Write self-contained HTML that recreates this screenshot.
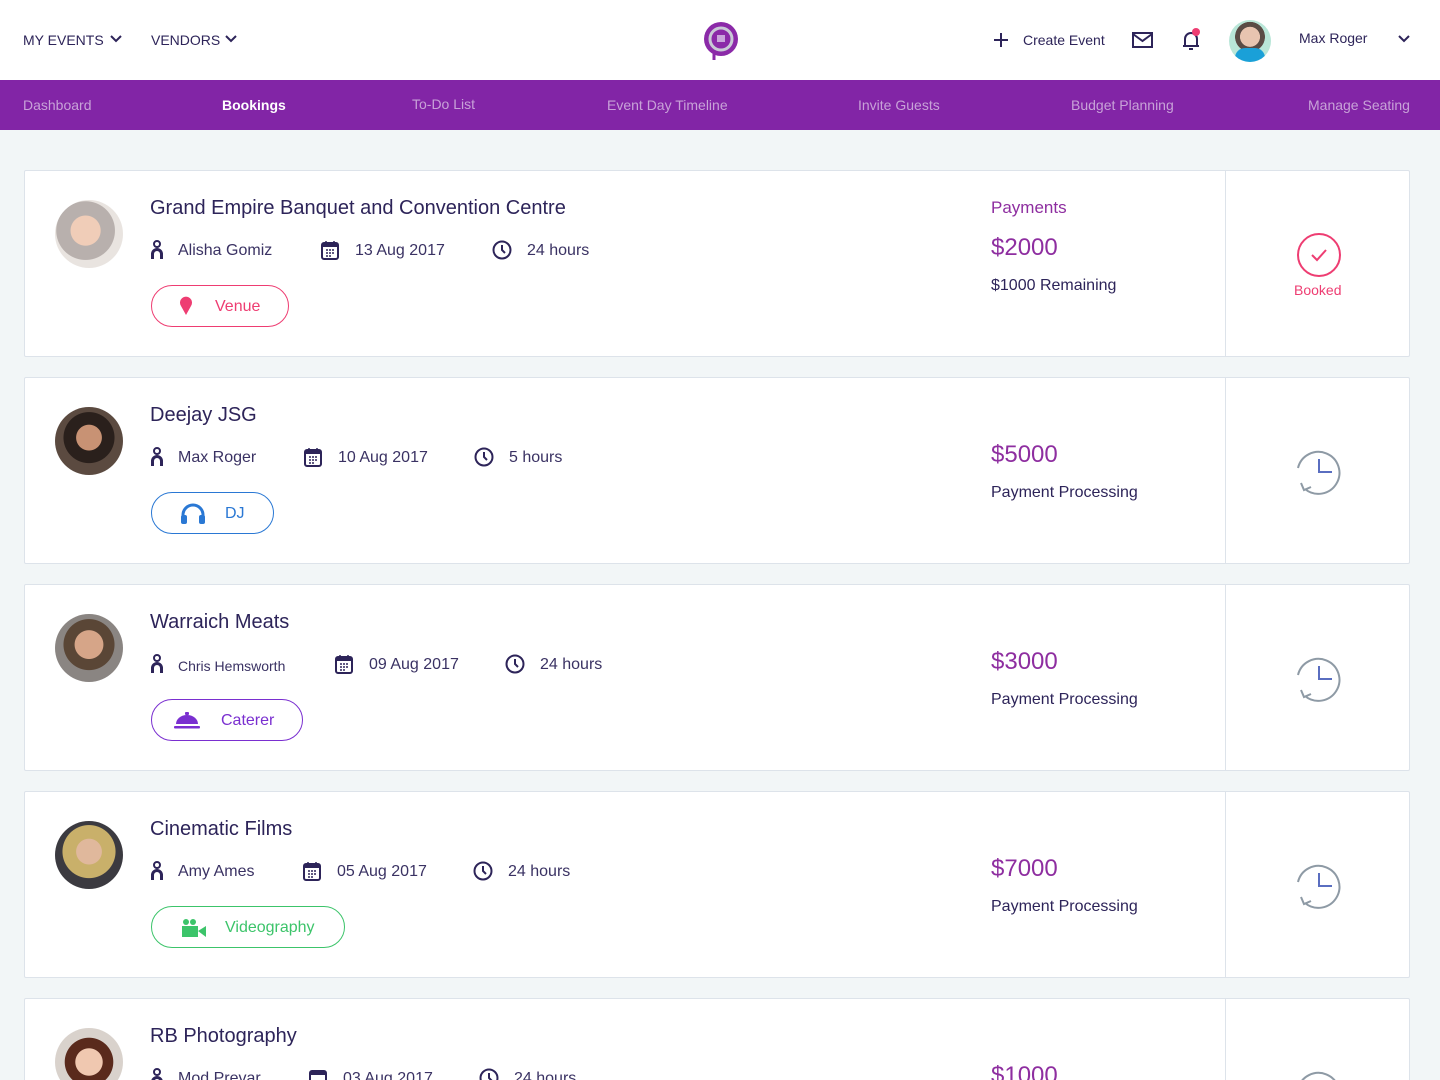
<!DOCTYPE html>
<html><head><meta charset="utf-8">
<style>
*{margin:0;padding:0;box-sizing:border-box}
html,body{width:1440px;height:1080px;overflow:hidden}
body{background:#f2f6f7;font-family:"Liberation Sans",sans-serif;color:#2d2459;position:relative}
.abs{position:absolute}
.top{position:absolute;left:0;top:0;width:1440px;height:80px;background:#fff}
.nav{position:absolute;left:0;top:80px;width:1440px;height:50px;background:#8225a6}
.nav span{position:absolute;top:17px;font-size:14px;color:#c8a2d8;white-space:nowrap}
.card{position:absolute;left:24px;width:1386px;height:187px;background:#fff;border:1px solid #dde3ea;border-radius:2px;overflow:hidden}
.div{position:absolute;left:1200px;top:0;width:1px;height:100%;background:#dde3ea}
.av{position:absolute;left:30px;top:29px;width:68px;height:68px;border-radius:50%}
.title{position:absolute;left:125px;top:26px;font-size:20px;color:#2d2459;white-space:nowrap}
.m{position:absolute;top:71px;font-size:16px;color:#3a3263;white-space:nowrap}
.ic{position:absolute;top:69px}
.pill{position:absolute;left:126px;top:114px;height:42px;border:1px solid;border-radius:21px}
.pill span{position:absolute;top:12px;font-size:16px}
.pill svg{position:absolute}
.amt{position:absolute;left:966px;font-size:24px;color:#8e2ea0}
.sub{position:absolute;left:966px;font-size:16px;color:#2d2459;white-space:nowrap}
.clk{position:absolute;left:1268px;top:68px}
</style></head><body>
<div class="top">
  <div class="abs" style="left:23px;top:32px;font-size:14px;color:#2d2459">MY EVENTS</div>
  <svg class="abs" style="left:110px;top:34px" width="12" height="10"><path d="M1 2l5 5 5-5" fill="none" stroke="#2d2459" stroke-width="2"/></svg>
  <div class="abs" style="left:151px;top:32px;font-size:14px;color:#2d2459">VENDORS</div>
  <svg class="abs" style="left:225px;top:34px" width="12" height="10"><path d="M1 2l5 5 5-5" fill="none" stroke="#2d2459" stroke-width="2"/></svg>
  <svg class="abs" style="left:702px;top:20px" width="38" height="42"><circle cx="19" cy="19" r="17" fill="#8b2aa8"/><circle cx="19" cy="19" r="11" fill="none" stroke="#c9c9d6" stroke-width="3"/><circle cx="19" cy="19" r="8" fill="#8b2aa8"/><rect x="15" y="15" width="8" height="7" fill="#c9a6db"/><path d="M12 30v10" stroke="#8b2aa8" stroke-width="3"/></svg>
  <svg class="abs" style="left:993px;top:32px" width="16" height="16"><path d="M8 1v14M1 8h14" stroke="#2d2459" stroke-width="2"/></svg>
  <div class="abs" style="left:1023px;top:32px;font-size:14px;color:#2d2459">Create Event</div>
  <svg class="abs" style="left:1132px;top:31px" width="22" height="18"><rect x="1" y="2" width="19" height="14" fill="none" stroke="#2d2459" stroke-width="2"/><path d="M1 3l9.5 7 9.5-7" fill="none" stroke="#2d2459" stroke-width="2"/></svg>
  <svg class="abs" style="left:1181px;top:28px" width="22" height="24"><path d="M4 18V11a6 6 0 0112 0v7M2 18h16M8 21h4" fill="none" stroke="#2d2459" stroke-width="2"/><circle cx="15" cy="4" r="4" fill="#ee3d72"/></svg>
  <div class="abs" style="left:1229px;top:20px;width:42px;height:42px;border-radius:50%;background:radial-gradient(circle at 50% 40%,#e8c4b0 0 30%,#5a4b45 31% 45%,#b9e6d8 46%),#9bd;overflow:hidden"><div style="position:absolute;left:6px;top:28px;width:30px;height:14px;background:#1aa0d8;border-radius:10px 10px 0 0"></div></div>
  <div class="abs" style="left:1299px;top:30px;font-size:14px;color:#2d2459">Max Roger</div>
  <svg class="abs" style="left:1398px;top:34px" width="12" height="10"><path d="M1 2l5 5 5-5" fill="none" stroke="#2d2459" stroke-width="2"/></svg>
</div>
<div class="nav">
  <span style="left:23px">Dashboard</span>
  <span style="left:222px;color:#fff;font-weight:bold">Bookings</span>
  <span style="left:412px;top:16px">To-Do List</span>
  <span style="left:607px">Event Day Timeline</span>
  <span style="left:858px">Invite Guests</span>
  <span style="left:1071px">Budget Planning</span>
  <span style="left:1308px">Manage Seating</span>
</div>

<div class="card" style="top:170px">
  <div class="av" style="background:radial-gradient(circle at 45% 45%,#f0cdb8 0 28%,#b8b0ad 29% 55%,#e9e4e0 56%)"></div>
  <div class="title">Grand Empire Banquet and Convention Centre</div>
  <svg class="ic" style="left:126px" width="12" height="20"><circle cx="6" cy="4" r="3" fill="none" stroke="#2d2459" stroke-width="2"/><path d="M1.5 19v-5a4.5 4.5 0 019 0v5" fill="none" stroke="#2d2459" stroke-width="3"/></svg>
  <div class="m" style="left:153px">Alisha Gomiz</div>
  <svg class="ic" style="left:296px" width="18" height="20"><rect x="1" y="3" width="16" height="16" rx="2" fill="none" stroke="#2d2459" stroke-width="2"/><rect x="1" y="3" width="16" height="4" fill="#2d2459"/><path d="M5 1v4M13 1v4M5 10h2M8 10h2M11 10h2M5 13h2M8 13h2M11 13h2M5 16h2M8 16h2" stroke="#2d2459" stroke-width="1.5"/></svg>
  <div class="m" style="left:330px">13 Aug 2017</div>
  <svg class="ic" style="left:467px" width="20" height="20"><circle cx="10" cy="10" r="8.5" fill="none" stroke="#2d2459" stroke-width="2"/><path d="M10 5v5l3 3" fill="none" stroke="#2d2459" stroke-width="2"/></svg>
  <div class="m" style="left:502px">24 hours</div>
  <div class="pill" style="width:138px;border-color:#ee3d72"><svg style="left:27px;top:10px" width="14" height="20"><path d="M7 19L2 10a6 6 0 1110 0z" fill="#ee3d72"/></svg><span style="left:63px;color:#ee3d72">Venue</span></div>
  <div class="abs" style="left:966px;top:27px;font-size:17px;color:#8e2ea0">Payments</div>
  <div class="amt" style="top:63px">$2000</div>
  <div class="sub" style="top:106px">$1000 Remaining</div>
  <div class="div"></div>
  <svg class="abs" style="left:1271px;top:61px" width="46" height="46"><circle cx="23" cy="23" r="21" fill="none" stroke="#ee3d72" stroke-width="2"/><path d="M16 23l5 5 9-10" fill="none" stroke="#ee3d72" stroke-width="2"/></svg>
  <div class="abs" style="left:1269px;top:111px;font-size:14px;color:#ee3d72">Booked</div>
</div>

<div class="card" style="top:377px">
  <div class="av" style="background:radial-gradient(circle at 50% 45%,#c89274 0 25%,#2a201c 26% 50%,#5b4a40 51%)"></div>
  <div class="title">Deejay JSG</div>
  <svg class="ic" style="left:126px" width="12" height="20"><circle cx="6" cy="4" r="3" fill="none" stroke="#2d2459" stroke-width="2"/><path d="M1.5 19v-5a4.5 4.5 0 019 0v5" fill="none" stroke="#2d2459" stroke-width="3"/></svg>
  <div class="m" style="left:153px">Max Roger</div>
  <svg class="ic" style="left:279px" width="18" height="20"><rect x="1" y="3" width="16" height="16" rx="2" fill="none" stroke="#2d2459" stroke-width="2"/><rect x="1" y="3" width="16" height="4" fill="#2d2459"/><path d="M5 1v4M13 1v4M5 10h2M8 10h2M11 10h2M5 13h2M8 13h2M11 13h2M5 16h2M8 16h2" stroke="#2d2459" stroke-width="1.5"/></svg>
  <div class="m" style="left:313px">10 Aug 2017</div>
  <svg class="ic" style="left:449px" width="20" height="20"><circle cx="10" cy="10" r="8.5" fill="none" stroke="#2d2459" stroke-width="2"/><path d="M10 5v5l3 3" fill="none" stroke="#2d2459" stroke-width="2"/></svg>
  <div class="m" style="left:484px">5 hours</div>
  <div class="pill" style="width:123px;border-color:#2a78d4"><svg style="left:28px;top:10px" width="26" height="22"><path d="M3 16v-4a10 10 0 0120 0v4" fill="none" stroke="#2a78d4" stroke-width="3"/><rect x="1" y="12" width="6" height="9" rx="2" fill="#2a78d4"/><rect x="19" y="12" width="6" height="9" rx="2" fill="#2a78d4"/></svg><span style="left:73px;color:#2a78d4">DJ</span></div>
  <div class="amt" style="top:63px">$5000</div>
  <div class="sub" style="top:106px">Payment Processing</div>
  <div class="div"></div>
  <svg class="clk" width="52" height="52"><path d="M5 22A21 21 0 1 1 12 43" fill="none" stroke="#8e9aa5" stroke-width="2"/><path d="M8 37l3 7 7-3" fill="none" stroke="#8e9aa5" stroke-width="2"/><path d="M26 13v13h13" fill="none" stroke="#5a6ec0" stroke-width="2"/></svg>
</div>

<div class="card" style="top:584px">
  <div class="av" style="background:radial-gradient(circle at 50% 45%,#d6a588 0 28%,#5a4636 29% 50%,#8a8582 51%)"></div>
  <div class="title">Warraich Meats</div>
  <svg class="ic" style="left:126px" width="12" height="20"><circle cx="6" cy="4" r="3" fill="none" stroke="#2d2459" stroke-width="2"/><path d="M1.5 19v-5a4.5 4.5 0 019 0v5" fill="none" stroke="#2d2459" stroke-width="3"/></svg>
  <div class="m" style="left:153px;font-size:14px;top:73px">Chris Hemsworth</div>
  <svg class="ic" style="left:310px" width="18" height="20"><rect x="1" y="3" width="16" height="16" rx="2" fill="none" stroke="#2d2459" stroke-width="2"/><rect x="1" y="3" width="16" height="4" fill="#2d2459"/><path d="M5 1v4M13 1v4M5 10h2M8 10h2M11 10h2M5 13h2M8 13h2M11 13h2M5 16h2M8 16h2" stroke="#2d2459" stroke-width="1.5"/></svg>
  <div class="m" style="left:344px">09 Aug 2017</div>
  <svg class="ic" style="left:480px" width="20" height="20"><circle cx="10" cy="10" r="8.5" fill="none" stroke="#2d2459" stroke-width="2"/><path d="M10 5v5l3 3" fill="none" stroke="#2d2459" stroke-width="2"/></svg>
  <div class="m" style="left:515px">24 hours</div>
  <div class="pill" style="width:152px;border-color:#7a2fd0"><svg style="left:21px;top:11px" width="28" height="18"><path d="M3 13a11 9 0 0122 0z" fill="#7a2fd0"/><rect x="12" y="1" width="4" height="3" rx="1" fill="#7a2fd0"/><rect x="1" y="15" width="26" height="2.5" rx="1" fill="#7a2fd0"/></svg><span style="left:69px;color:#7a2fd0">Caterer</span></div>
  <div class="amt" style="top:63px">$3000</div>
  <div class="sub" style="top:106px">Payment Processing</div>
  <div class="div"></div>
  <svg class="clk" width="52" height="52"><path d="M5 22A21 21 0 1 1 12 43" fill="none" stroke="#8e9aa5" stroke-width="2"/><path d="M8 37l3 7 7-3" fill="none" stroke="#8e9aa5" stroke-width="2"/><path d="M26 13v13h13" fill="none" stroke="#5a6ec0" stroke-width="2"/></svg>
</div>

<div class="card" style="top:791px">
  <div class="av" style="background:radial-gradient(circle at 50% 45%,#e0b89c 0 25%,#c9b06a 26% 52%,#3b3a40 53%)"></div>
  <div class="title">Cinematic Films</div>
  <svg class="ic" style="left:126px" width="12" height="20"><circle cx="6" cy="4" r="3" fill="none" stroke="#2d2459" stroke-width="2"/><path d="M1.5 19v-5a4.5 4.5 0 019 0v5" fill="none" stroke="#2d2459" stroke-width="3"/></svg>
  <div class="m" style="left:153px">Amy Ames</div>
  <svg class="ic" style="left:278px" width="18" height="20"><rect x="1" y="3" width="16" height="16" rx="2" fill="none" stroke="#2d2459" stroke-width="2"/><rect x="1" y="3" width="16" height="4" fill="#2d2459"/><path d="M5 1v4M13 1v4M5 10h2M8 10h2M11 10h2M5 13h2M8 13h2M11 13h2M5 16h2M8 16h2" stroke="#2d2459" stroke-width="1.5"/></svg>
  <div class="m" style="left:312px">05 Aug 2017</div>
  <svg class="ic" style="left:448px" width="20" height="20"><circle cx="10" cy="10" r="8.5" fill="none" stroke="#2d2459" stroke-width="2"/><path d="M10 5v5l3 3" fill="none" stroke="#2d2459" stroke-width="2"/></svg>
  <div class="m" style="left:483px">24 hours</div>
  <div class="pill" style="width:194px;border-color:#3cc46a"><svg style="left:29px;top:11px" width="26" height="20"><circle cx="5" cy="4" r="3" fill="#3cc46a"/><circle cx="12" cy="4" r="3" fill="#3cc46a"/><rect x="1" y="8" width="16" height="11" fill="#3cc46a"/><path d="M17 13l8-5v11z" fill="#3cc46a"/></svg><span style="left:73px;color:#3cc46a">Videography</span></div>
  <div class="amt" style="top:63px">$7000</div>
  <div class="sub" style="top:106px">Payment Processing</div>
  <div class="div"></div>
  <svg class="clk" width="52" height="52"><path d="M5 22A21 21 0 1 1 12 43" fill="none" stroke="#8e9aa5" stroke-width="2"/><path d="M8 37l3 7 7-3" fill="none" stroke="#8e9aa5" stroke-width="2"/><path d="M26 13v13h13" fill="none" stroke="#5a6ec0" stroke-width="2"/></svg>
</div>

<div class="card" style="top:998px">
  <div class="av" style="background:radial-gradient(circle at 50% 50%,#f0c8b0 0 28%,#5a2a1c 29% 50%,#d9d2cc 51%)"></div>
  <div class="title">RB Photography</div>
  <svg class="ic" style="left:126px" width="12" height="20"><circle cx="6" cy="4" r="3" fill="none" stroke="#2d2459" stroke-width="2"/><path d="M1.5 19v-5a4.5 4.5 0 019 0v5" fill="none" stroke="#2d2459" stroke-width="3"/></svg>
  <div class="m" style="left:153px">Mod Prevar</div>
  <svg class="ic" style="left:284px" width="18" height="20"><rect x="1" y="3" width="16" height="16" rx="2" fill="none" stroke="#2d2459" stroke-width="2"/><rect x="1" y="3" width="16" height="4" fill="#2d2459"/></svg>
  <div class="m" style="left:318px">03 Aug 2017</div>
  <svg class="ic" style="left:454px" width="20" height="20"><circle cx="10" cy="10" r="8.5" fill="none" stroke="#2d2459" stroke-width="2"/><path d="M10 5v5l3 3" fill="none" stroke="#2d2459" stroke-width="2"/></svg>
  <div class="m" style="left:489px">24 hours</div>
  <div class="amt" style="top:63px">$1000</div>
  <div class="div"></div>
  <svg class="clk" width="52" height="52"><path d="M5 22A21 21 0 1 1 12 43" fill="none" stroke="#8e9aa5" stroke-width="2"/><path d="M26 13v13h13" fill="none" stroke="#5a6ec0" stroke-width="2"/></svg>
</div>
</body></html>
